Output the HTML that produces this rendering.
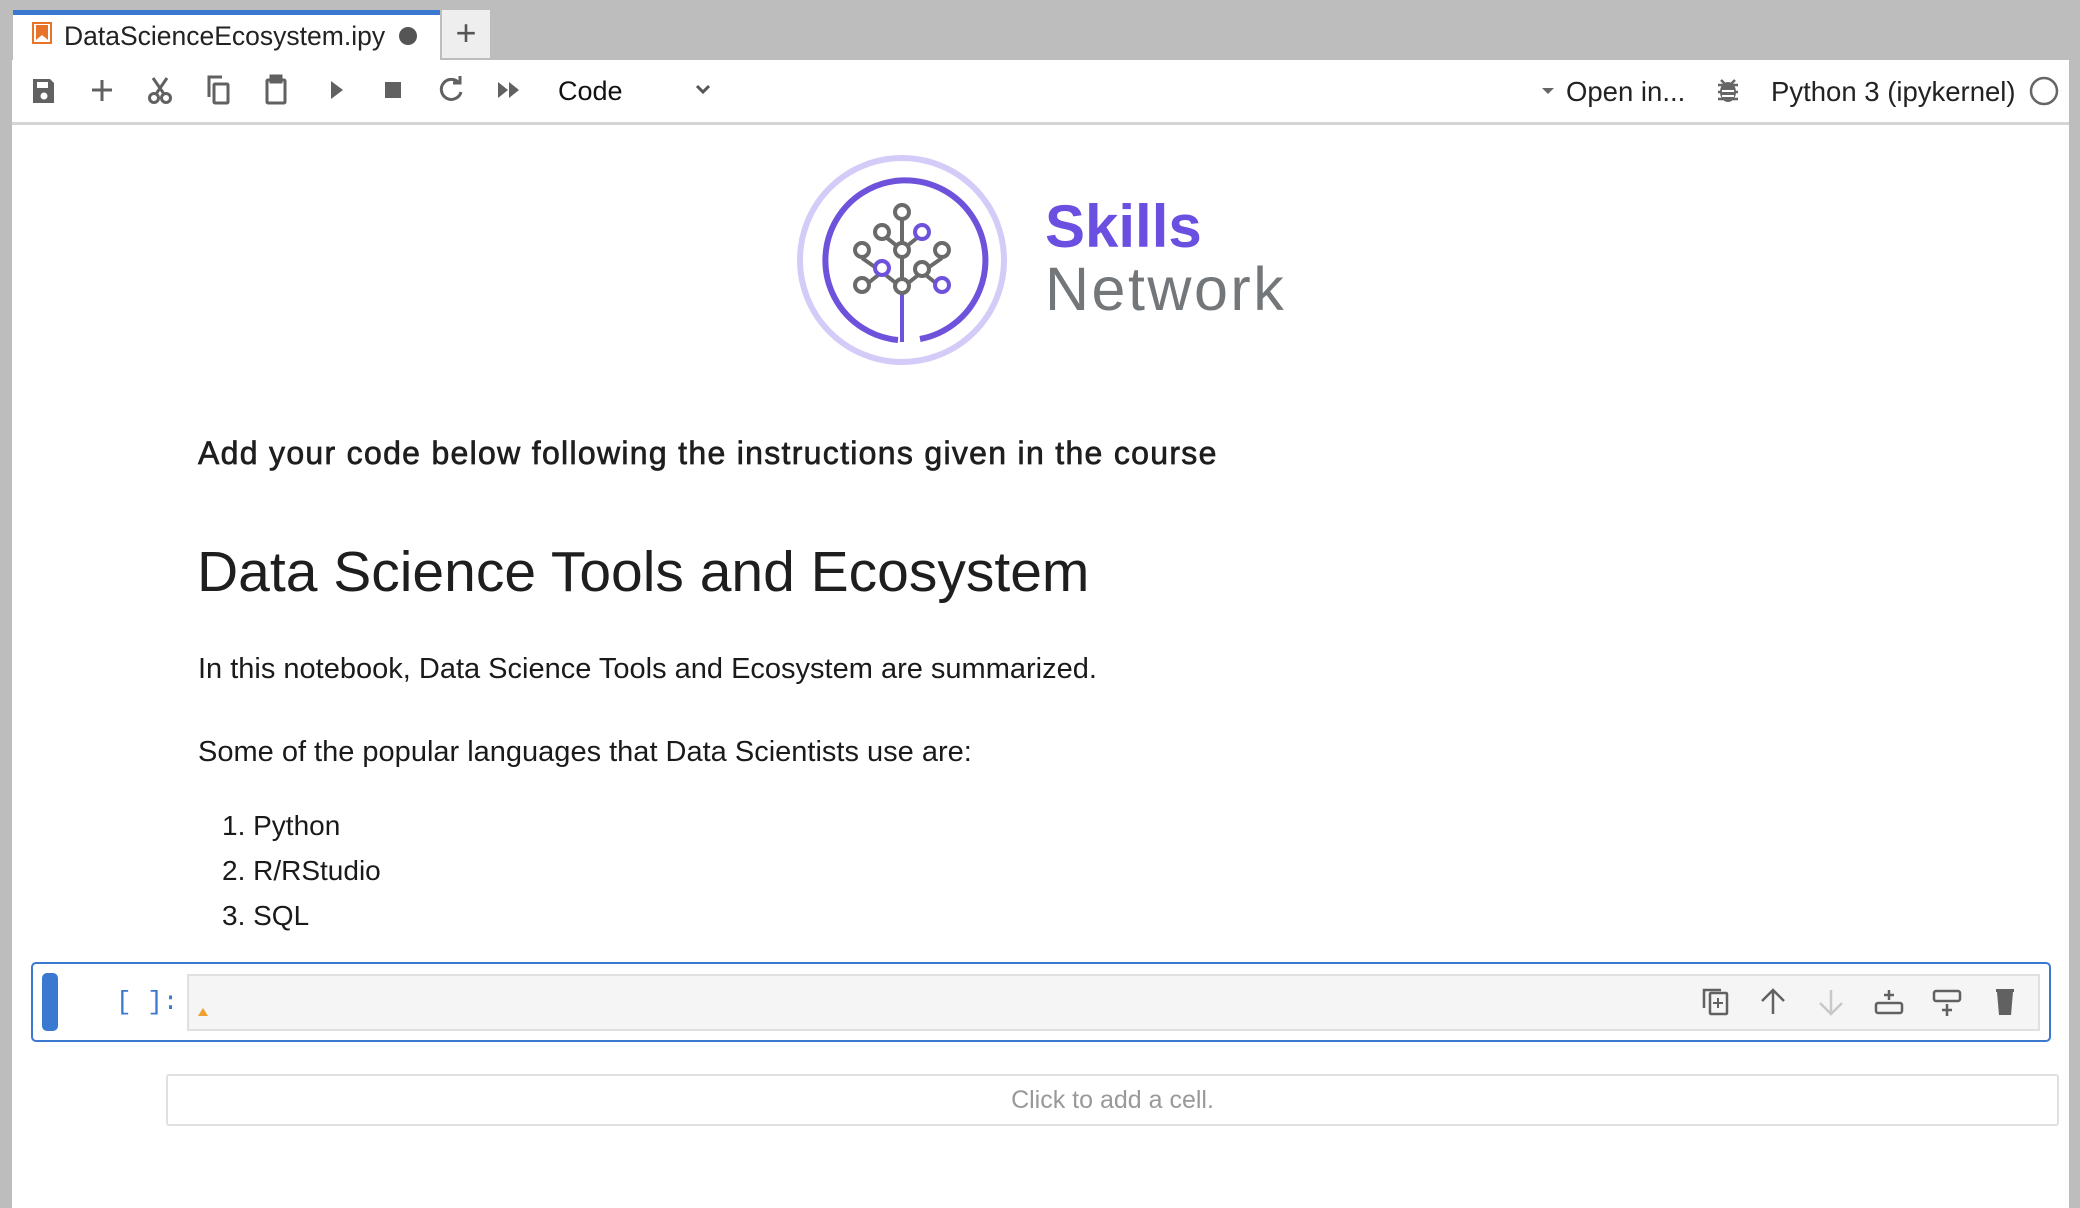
<!DOCTYPE html>
<html><head><meta charset="utf-8"><style>
*{margin:0;padding:0;box-sizing:border-box}
body{width:2080px;height:1208px;background:#bdbdbd;position:relative;overflow:hidden;font-family:"Liberation Sans",Arial,sans-serif;color:#1a1a1a}
.abs{position:absolute}
.main{left:12px;top:60px;width:2057px;height:1148px;background:#fff}
.tab{left:13px;top:10px;width:427px;height:52px;background:#fff;border-top:5px solid #3b78cf}
.tab span{position:absolute;left:51px;top:6px;font-size:26.5px;color:#222}
.plus{left:442px;top:10px;width:48px;height:48px;background:#eee;font-size:36px;color:#555;text-align:center;line-height:46px}
.tb{top:122px;left:12px;width:2057px;height:3px;background:#d5d5d5}
svg{position:absolute;overflow:visible}
.txt{position:absolute;white-space:nowrap}
</style></head><body>
<div class="abs main"></div>
<div class="abs tab"><svg style="left:19px;top:7px" width="20" height="22" viewBox="0 0 20 22"><rect x="1" y="1" width="18" height="20" fill="none" stroke="#e8742c" stroke-width="2"/><path d="M4 3h12v15l-6-5-6 5z" fill="#e8742c"/></svg><span>DataScienceEcosystem.ipy</span><svg style="left:386px;top:12px" width="18" height="18"><circle cx="9" cy="9" r="9" fill="#555"/></svg></div>
<div class="abs plus">+</div>
<div class="abs tb"></div>
<svg style="left:0;top:0" width="2080" height="125" fill="none" stroke="#616161" stroke-width="3">
<path d="M33 79h17l4 4v20H33z" fill="#616161" stroke="none"/><circle cx="44" cy="96" r="3.5" fill="#fff" stroke="none"/><rect x="37" y="82" width="11" height="6" fill="#fff" stroke="none"/>
<path d="M102 80v21M92 90h20"/>
<circle cx="154" cy="98" r="4.5"/><circle cx="166" cy="98" r="4.5"/><path d="M156 94l11-16M164 94l-11-16"/>
<rect x="214" y="84" width="14" height="19" rx="1"/><path d="M209 97V77h13"/>
<rect x="267" y="80" width="18" height="23" rx="1"/><rect x="271" y="76" width="10" height="6" fill="#616161"/>
<path d="M331 81l12 9-12 9z" fill="#616161" stroke="none"/>
<rect x="385" y="82" width="16" height="16" fill="#616161" stroke="none"/>
<path d="M459 83a10 10 0 1 0 2 9"/><path d="M453 83h7v-7"/>
<path d="M498 82l10 8-10 8zM509 82l10 8-10 8z" fill="#616161" stroke="none"/>
<path d="M697 86l6 6 6-6" stroke="#555"/>
<path d="M1542 88h12l-6 6z" fill="#666" stroke="none"/>
<ellipse cx="1728" cy="92" rx="8" ry="10" fill="#666" stroke="none"/><path d="M1718 85h20M1718 92h20M1718 99h20M1721 80l4 4M1735 80l-4 4" stroke="#666" stroke-width="2.5"/><path d="M1722 91h12M1722 96h12" stroke="#fff" stroke-width="2"/>
<circle cx="2044" cy="91" r="13" stroke="#666" stroke-width="2.5"/>
</svg>
<div class="txt" style="left:558px;top:76px;font-size:27px;color:#111">Code</div>
<div class="txt" style="left:1566px;top:76px;font-size:27.5px;color:#222">Open in...</div>
<div class="txt" style="left:1771px;top:76px;font-size:27.5px;color:#222">Python 3 (ipykernel)</div>
<svg style="left:0;top:0" width="2080" height="400" fill="none">
<circle cx="902" cy="260" r="102" stroke="#d4cbf8" stroke-width="6"/>
<path d="M898 340A80 80 0 1 1 920 339" stroke="#6e52dc" stroke-width="6"/>
<path d="M902 342V290" stroke="#6e52dc" stroke-width="4"/>
<g stroke="#6a6a6a" stroke-width="4">
<path d="M902 290V215M902 250l-20-16M902 250l20-16M902 288l-20-16M902 288l20-16M882 272l-20-14M922 272l20-14M882 272l-20 16M922 272l20 16"/>
<circle cx="902" cy="212" r="7" fill="#fff"/><circle cx="882" cy="232" r="7" fill="#fff"/><circle cx="902" cy="250" r="7" fill="#fff"/><circle cx="862" cy="250" r="7" fill="#fff"/><circle cx="942" cy="250" r="7" fill="#fff"/><circle cx="922" cy="269" r="7" fill="#fff"/><circle cx="862" cy="285" r="7" fill="#fff"/><circle cx="902" cy="286" r="7" fill="#fff"/>
</g>
<g stroke="#6e52dc" stroke-width="4" fill="#fff"><circle cx="922" cy="232" r="7"/><circle cx="882" cy="268" r="7"/><circle cx="942" cy="285" r="7"/></g>
</svg>
<div class="txt" style="left:1045px;top:192px;font-size:60px;font-weight:bold;color:#6b4fe0">Skills</div>
<div class="txt" style="left:1045px;top:254px;font-size:61px;color:#74777a;letter-spacing:2.5px">Network</div>
<div class="txt" style="left:198px;top:435px;font-size:32px;color:#1e1e1e;letter-spacing:1.3px;-webkit-text-stroke:0.7px #1e1e1e">Add your code below following the instructions given in the course</div>
<div class="txt" style="left:197px;top:539px;font-size:57px;color:#1e1e1e">Data Science Tools and Ecosystem</div>
<div class="txt" style="left:198px;top:653px;font-size:29px">In this notebook, Data Science Tools and Ecosystem are summarized.</div>
<div class="txt" style="left:198px;top:736px;font-size:29px">Some of the popular languages that Data Scientists use are:</div>
<div class="txt" style="left:222px;top:810px;font-size:28px">1. Python</div>
<div class="txt" style="left:222px;top:855px;font-size:28px">2. R/RStudio</div>
<div class="txt" style="left:222px;top:900px;font-size:28px">3. SQL</div>
<div class="abs" style="left:31px;top:962px;width:2020px;height:80px;border:2px solid #3b78cf;border-radius:5px"></div>
<div class="abs" style="left:42px;top:973px;width:16px;height:58px;background:#3b78cf;border-radius:5px"></div>
<div class="txt" style="left:116px;top:987px;font-family:'Liberation Mono',monospace;font-size:26px;color:#3b78cf">[ ]:</div>
<div class="abs" style="left:187px;top:974px;width:1853px;height:57px;background:#f5f5f5;border:2px solid #e0e0e0"></div>
<svg style="left:0;top:0" width="2080" height="1208" fill="none" stroke="#616161" stroke-width="2.5">
<path d="M198 1016l5-8 5 8z" fill="#f0a030" stroke="none"/>
<rect x="1710" y="993" width="17" height="21" rx="1"/><path d="M1704 1008v-18h17"/><path d="M1718 998v10M1713 1003h10" stroke-width="2"/>
<path d="M1773 1014v-24M1762 1001l11-11 11 11"/>
<path d="M1831 990v24M1820 1003l11 11 11-11" stroke="#c8c8c8"/>
<rect x="1876" y="1003" width="26" height="10" rx="2"/><path d="M1889 990v10M1884 995h10"/>
<rect x="1934" y="991" width="26" height="10" rx="2"/><path d="M1947 1004v12M1942 1010h10"/>
<path d="M1997 992h16l-2 23h-12z" fill="#616161" stroke="none"/><rect x="1996" y="989" width="18" height="3" fill="#616161" stroke="none"/>
</svg>
<div class="abs" style="left:166px;top:1074px;width:1893px;height:52px;border:2px solid #e0e0e0;border-radius:3px"></div>
<div class="txt" style="left:166px;width:1893px;text-align:center;top:1086px;font-size:25px;color:#999">Click to add a cell.</div>
</body></html>
